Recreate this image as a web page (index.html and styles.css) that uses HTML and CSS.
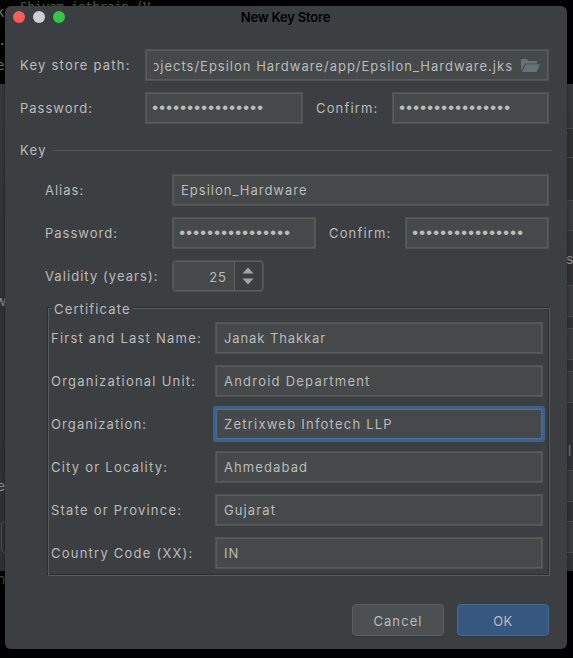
FILE: index.html
```html
<!DOCTYPE html>
<html lang="en">
<head>
<meta charset="utf-8">
<title>New Key Store</title>
<link rel="stylesheet" href="styles.css">
</head>
<body>
<div class="backdrop">
  <div class="panel"></div>
  <span class="code c1">k</span><span class="code c1b">Shivam jetbrain (V</span><span class="code c2">.</span><span class="code c3">e</span>
  <span class="code grey c4">w</span><span class="code grey c5">e</span><span class="code c6">n</span>
  <span class="code grey c7">s</span><span class="code grey blue c8">l</span>
  <i class="edge e1"></i><i class="edge e2"></i><i class="edge e3"></i><i class="edge e4"></i><i class="edge e5"></i><i class="edge e6"></i><i class="edge e7"></i><i class="edge e8"></i><i class="edge e9"></i><i class="stub"></i>
</div>
<main class="dialog">
  <header class="titlebar">
    <div class="lights"><i class="red"></i><i class="gray"></i><i class="green"></i></div>
    <h1>New Key Store</h1>
  </header>
  <section class="store">
    <div class="row"><label class="store-label wide">Key store path:</label>
      <div class="field path"><div class="clip"><span>ojects/Epsilon Hardware/app/Epsilon_Hardware.jks</span></div>
        <svg class="folder" width="20" height="15" viewBox="0 0 20 15"><path d="M1 13V1h5.6l2 2H17v2.4H5.2z"/><path d="M5.8 6.3H20L16.5 14H2z"/></svg></div></div>
    <div class="row"><label class="store-label">Password:</label><div class="field dots w-store">••••••••••••••••</div><label class="confirm">Confirm:</label><div class="field dots grow">••••••••••••••••</div></div>
  </section>
  <div class="divider"><span>Key</span><i></i></div>
  <section class="key">
    <div class="row"><label class="key-label">Alias:</label><div class="field grow">Epsilon_Hardware</div></div>
    <div class="row"><label class="key-label">Password:</label><div class="field dots w-key">••••••••••••••••</div><label class="confirm">Confirm:</label><div class="field dots grow">••••••••••••••••</div></div>
    <div class="row"><label class="key-label validity">Validity (years):</label>
      <div class="spinner"><div class="value">25</div><div class="arrows"><svg width="12" height="18" viewBox="0 0 12 18"><path d="M.5 6.5L6 .5l5.5 6zM.5 11.5h11L6 17.5z"/></svg></div></div></div>
  </section>
  <section class="cert">
    <span class="legend">Certificate</span>
    <div class="row"><label class="wide">First and Last Name:</label><div class="field tight">Janak Thakkar</div></div>
    <div class="row"><label class="wide">Organizational Unit:</label><div class="field wide">Android Department</div></div>
    <div class="row"><label class="medium">Organization:</label><div class="field focus wide">Zetrixweb Infotech LLP</div></div>
    <div class="row"><label class="wide">City or Locality:</label><div class="field medium">Ahmedabad</div></div>
    <div class="row"><label class="wide">State or Province:</label><div class="field medium">Gujarat</div></div>
    <div class="row"><label class="wide">Country Code (XX):</label><div class="field">IN</div></div>
  </section>
  <footer><button class="cancel">Cancel</button><button class="ok">OK</button></footer>
</main>
</body>
</html>
```
FILE: styles.css
```css
* { box-sizing: border-box; }
body { margin: 0; width: 573px; height: 658px; overflow: hidden; background: #000; position: relative;
  font: 13px/20px Inter, "Liberation Sans", sans-serif; letter-spacing: 1px; color: #bbb; }
.wide { letter-spacing: 1.23px; }
.medium { letter-spacing: 1.1px; }
.tight { letter-spacing: .9px; }
.backdrop { position: absolute; inset: 0; overflow: hidden; }
.panel { position: absolute; left: 0; right: 0; top: 84px; height: 487px; background: linear-gradient(#37393a, #303234 40%, #2f3133); }
.code { position: absolute; left: -3px; font: 14px/16px "DejaVu Sans Mono", monospace; color: #5f8350; white-space: pre; }
.grey { color: #8b8d8e; font-family: Inter, sans-serif; }
.blue { color: #4a7fc0; }
.c1 { top: 4px; left: -4px; }
.c1b { top: 0; left: 20px; font-size: 13px; line-height: 14px; letter-spacing: -.6px; color: #4a663d; }
.c2 { top: 32px; left: -2px; } .c3 { top: 57px; left: -4px; } .c4 { top: 293px; left: -5px; }
.c5 { top: 478px; left: -3px; } .c6 { top: 571px; left: -3px; color: #3b5131; }
.c7 { top: 251px; left: 566px; } .c8 { top: 443px; left: 568px; }
.edge { position: absolute; left: 567px; width: 6px; height: 32px; border: solid #484a4b; border-width: 1px 0; background: #383b3b; }
.e1 { top: 128px; height: 30px; background: #30302f; } .e2 { top: 199px; } .e3 { top: 243px; z-index: -1; } .e4 { top: 285px; }
.e5 { top: 328px; } .e6 { top: 371px; } .e7 { top: 470px; } .e8 { top: 521px; } .e9 { top: 157px; height: 44px; background: #30302f; }
.stub { position: absolute; left: 1px; top: 521px; width: 10px; height: 32px; border: 1px solid #4c4e4f; border-radius: 4px; }

.dialog { position: absolute; left: 5px; top: 6px; width: 562px; height: 643px; background: #3c3f41; border-radius: 6px;
  box-shadow: 0 1px 4px rgba(0,0,0,.4); display: flex; flex-direction: column; }
.titlebar { height: 43px; position: relative; padding-top: 1px; }
.titlebar h1 { margin: 0; font-size: 13px; line-height: 20px; font-weight: 600; letter-spacing: -.2px; color: #000; text-align: center; padding-right: 1px; }
.lights { position: absolute; left: 8px; top: 5px; display: flex; gap: 8px; }
.lights i { width: 12px; height: 12px; border-radius: 50%; }
.red { background: #fc5b57; } .gray { background: #d0cfd0; } .green { background: #33c748; }

.row { display: flex; align-items: center; height: 32px; }
.store, .key, .cert { display: flex; flex-direction: column; gap: 11px; }
.store { padding: 0 18px 0 15px; }
.store-label { width: 125px; }
.key-label { width: 127px; }
.validity { letter-spacing: 1.06px; }
label { white-space: nowrap; flex: none; }
.field { height: 32px; padding: 1px 7px 0 8px; line-height: 28px; background: #45494a; border: 1px solid #505355; box-shadow: inset 0 0 0 1px #5a5c5c; white-space: nowrap; }
.grow { flex: 1; }
.path { flex: 1; display: flex; align-items: center; gap: 7px; }
.clip { width: 359px; overflow: hidden; display: flex; justify-content: flex-end; }
.folder { flex: none; fill: #65727a; }
.dots { font: 17px/28px "Liberation Mono", monospace; letter-spacing: -3.2px; padding: 2px 0 0 4px; }
.w-store { width: 158px; margin-right: 13px; }
.w-key { width: 144px; margin-right: 13px; }
.confirm { width: 76px; letter-spacing: 1.15px; }

.divider { display: flex; align-items: center; height: 20px; margin: 16px 15px 0; }
.divider span { width: 33px; letter-spacing: 1.4px; }
.divider i { flex: 1; height: 1px; background: #515556; }
.key { padding: 14px 18px 0 40px; }
.spinner { width: 92px; height: 32px; display: flex; border: 1px solid #505355; box-shadow: inset 0 0 0 1px #5a5c5c; border-radius: 4px; padding: 1px; }
.value { width: 61px; background: #45494a; border-right: 1px solid #5f6162; text-align: right; padding-right: 7px; line-height: 30px; }
.arrows { flex: 1; display: flex; align-items: center; justify-content: center; padding-right: 1px; }
.arrows svg { fill: #a1a5a8; }

.cert { position: relative; margin: 15px 17px 0 42px; height: 269px; border: 1px solid; border-color: #2b2e30 #585b5d #585b5d #2b2e30;
  box-shadow: inset 1px 1px 0 #585b5d, inset -1px -1px 0 #2b2e30; padding: 14px 6px 0 3px; }
.cert label { width: 164px; }
.cert .field { flex: 1; }
.legend { position: absolute; left: 4px; top: -9px; padding: 0 2px; background: #3c3f41; letter-spacing: 1.15px; }
.cert .focus { border-color: #3f6490; box-shadow: 0 0 0 2px #3d6185, inset 0 0 0 1px #466d9b; border-radius: 1px; }

footer { display: flex; justify-content: flex-end; gap: 13px; padding: 28px 18px 0 0; }
button { width: 92px; height: 32px; border: 1px solid #5b5e60; border-radius: 4px; background: #4c5052; color: #bbb; font: inherit; letter-spacing: 1.1px; padding: 2px 0 0; box-shadow: 0 1px 1px #343739; }
.ok { background: #365880; border-color: #446b90; letter-spacing: .3px; }
```
